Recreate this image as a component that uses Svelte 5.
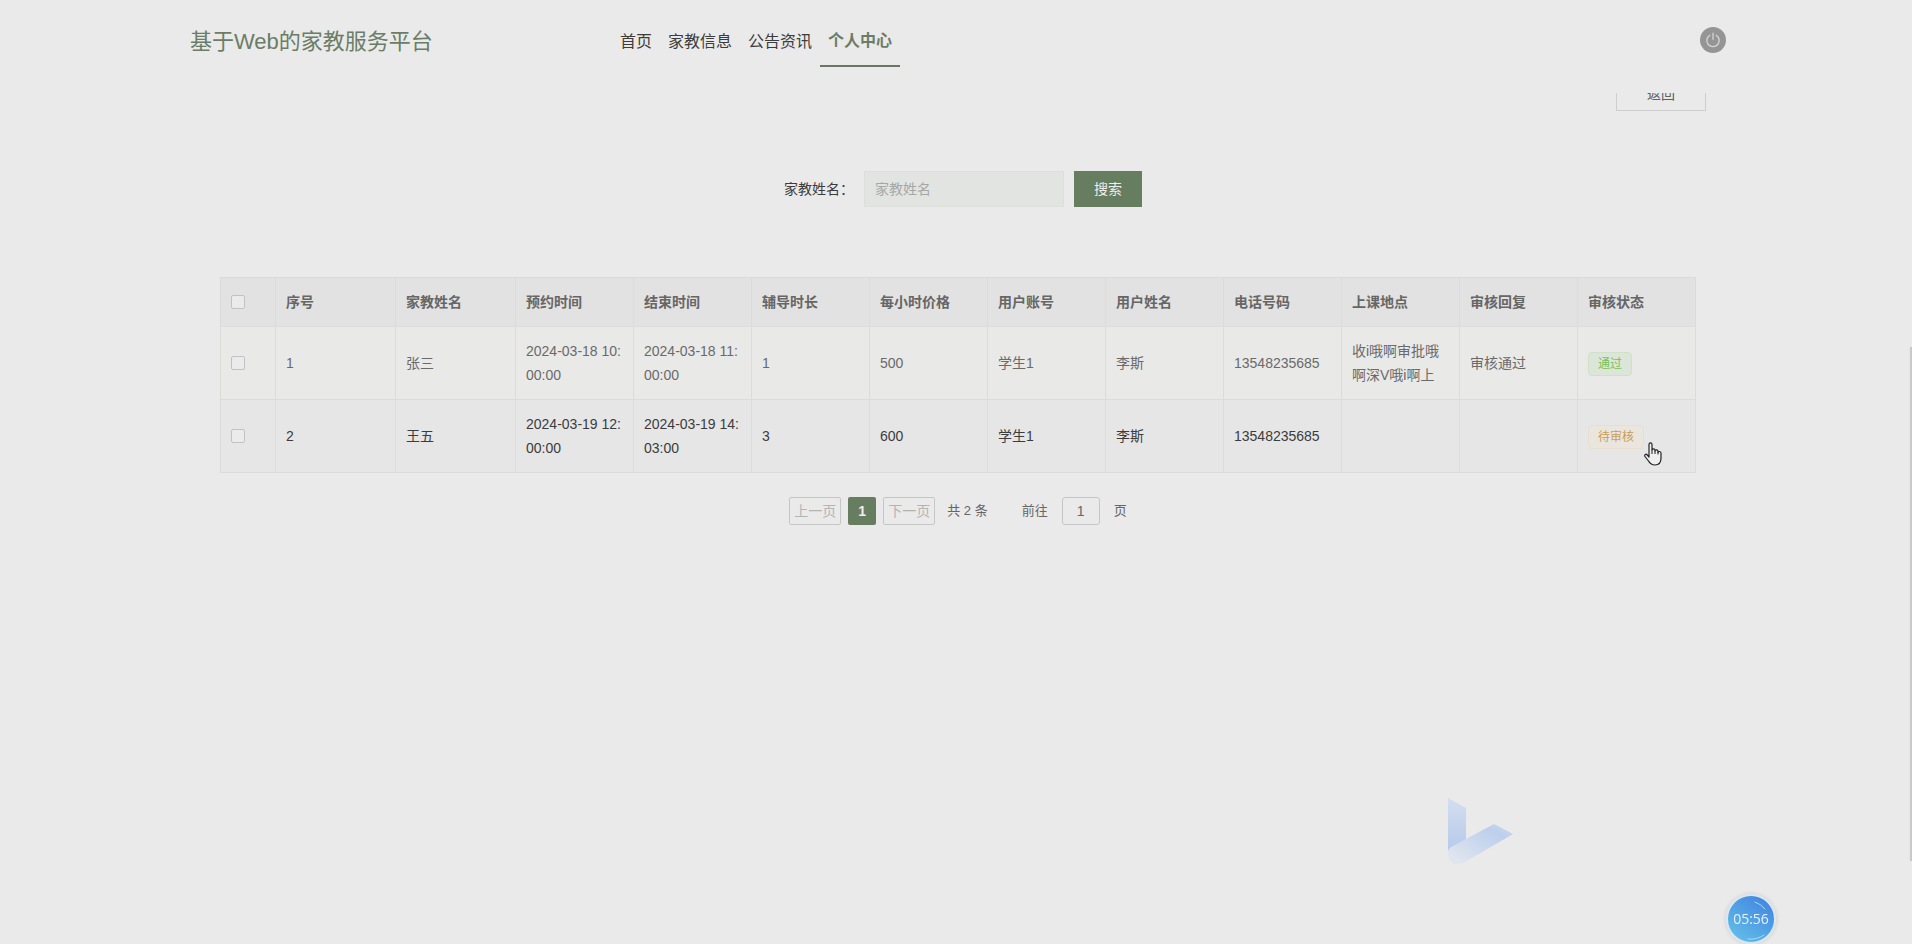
<script lang="ts">
	const menu = ["首页", "家教信息", "公告资讯", "个人中心"];
	const active = "个人中心";

	const columns = [
		"序号", "家教姓名", "预约时间", "结束时间", "辅导时长", "每小时价格",
		"用户账号", "用户姓名", "电话号码", "上课地点", "审核回复", "审核状态"
	];

	const rows = [
		{
			cells: ["1", "张三", "2024-03-18 10:00:00", "2024-03-18 11:00:00", "1", "500", "学生1", "李斯", "13548235685", "收i哦啊审批哦啊深V哦i啊上", "审核通过"],
			status: "通过",
			passed: true,
			hover: false
		},
		{
			cells: ["2", "王五", "2024-03-19 12:00:00", "2024-03-19 14:03:00", "3", "600", "学生1", "李斯", "13548235685", "", ""],
			status: "待审核",
			passed: false,
			hover: true
		}
	];

	let tutorName = $state("");
	let jumpPage = $state("1");
</script>

<header>
	<h1>基于Web的家教服务平台</h1>
	<nav>
		{#each menu as item}
			<a href="#/" class:active={item === active}>{item}</a>
		{/each}
	</nav>
	<button class="logout" aria-label="退出">
		<svg viewBox="0 0 26 26" width="26" height="26">
			<path d="M9.8 8.2a6.2 6.2 0 1 0 6.4 0M13 6.2v6" fill="none" stroke="#d6d6d6" stroke-width="1.3" stroke-linecap="round" />
		</svg>
	</button>
</header>

<main>
	<div class="back-row">
		<button class="back">返回</button>
	</div>

	<form class="search" onsubmit={(e) => e.preventDefault()}>
		<label for="tutor">家教姓名：</label>
		<input id="tutor" type="text" placeholder="家教姓名" bind:value={tutorName} />
		<button>搜索</button>
	</form>

	<table>
		<colgroup>
			<col class="col-check" />
			<col class="col-wide" />
			<col class="col-wide" />
			{#each columns.slice(2) as _}
				<col />
			{/each}
		</colgroup>
		<thead>
			<tr>
				<th><input type="checkbox" aria-label="全选" /></th>
				{#each columns as column}
					<th>{column}</th>
				{/each}
			</tr>
		</thead>
		<tbody>
			{#each rows as row}
				<tr class:hover={row.hover}>
					<td><input type="checkbox" aria-label={row.cells[1]} /></td>
					{#each row.cells as cell}
						<td>{cell}</td>
					{/each}
					<td><span class="tag" class:passed={row.passed}>{row.status}</span></td>
				</tr>
			{/each}
		</tbody>
	</table>

	<div class="pagination">
		<button class="step" disabled>上一页</button>
		<button class="current">1</button>
		<button class="step" disabled>下一页</button>
		<span class="total">共 2 条</span>
		<label for="jump">前往</label>
		<input id="jump" type="text" bind:value={jumpPage} />
		<span>页</span>
	</div>
</main>

<!-- floating things over the page -->
<svg class="bird" viewBox="0 0 70 70" width="70" height="70" aria-hidden="true">
	<defs>
		<linearGradient id="stem" x1="0" y1="0" x2="0" y2="1">
			<stop offset="0" stop-color="#d3deef" />
			<stop offset="1" stop-color="#b6caec" />
		</linearGradient>
		<linearGradient id="wing" x1="0" y1="1" x2="1" y2="0">
			<stop offset="0.1" stop-color="#e0e6ee" />
			<stop offset="0.75" stop-color="#bccfed" />
			<stop offset="1" stop-color="#cbd8ed" />
		</linearGradient>
	</defs>
	<path d="M0 2 18 12V46L0 55Z" fill="url(#stem)" />
	<path d="M0 56Q0 52 5 50L46 28 65 38 17 66Q10 70 4 67 0 64 0 56Z" fill="url(#wing)" />
</svg>

<div class="timer">
	<svg viewBox="0 0 46 46" width="46" height="46" aria-hidden="true">
		<path d="M27 6Q33 8 37 13M20 43Q29 44 36 39" fill="none" stroke="#a5dcf2" stroke-linecap="round" />
	</svg>
	<span>05:56</span>
</div>
<div class="scroll-thumb"></div>

<svg class="cursor" viewBox="0 0 18 24" width="18" height="24" aria-hidden="true">
	<path d="M5 15V2.5C5 .3 8 .3 8 2.500V8C8 6.500 11 6.500 11 8V9C11 7.500 14 7.500 14 9.200V10.500C14 9 17 9.200 17 11V16C17 20.500 14.500 23 11 23 7.500 23 6 21.500 4.500 19L1 14.500C0 12.500 2 11.500 3.300 13Z" fill="#efefef" stroke="#222" stroke-width="1.200" stroke-linejoin="round" />
	<path d="M8 8V12M11 9V12M14 10V12.500" fill="none" stroke="#222" />
</svg>

<style>
	:global(body) {
		background: #eaeaea;
		color: #3c3c3c;
		font: 14px/24px "Liberation Sans", "Noto Sans CJK SC", sans-serif;
	}

	button, input {
		box-sizing: border-box;
		margin: 0;
		font: inherit;
		color: inherit;
	}

	button {
		padding: 0;
		border: 0;
		background: none;
		cursor: pointer;
	}

	header {
		position: relative;
		z-index: 1;
		display: flex;
		align-items: flex-start;
		height: 93px;
		padding: 0 186px 0 190px;
		background: #eaeaea;
	}

	h1 {
		flex: 0 0 422px;
		margin: 0;
		font-size: 22px;
		font-weight: 400;
		line-height: 84px;
		color: #6b7d66;
	}

	nav {
		display: flex;
		flex: 1;
	}

	nav a {
		padding: 0 8px;
		font-size: 16px;
		line-height: 84px;
		color: #3c3c3c;
		text-decoration: none;
	}

	nav a.active {
		height: 65px;
		line-height: 82px;
		font-weight: 700;
		color: #6b7d66;
		border-bottom: 2px solid #6b7566;
	}

	.logout {
		width: 26px;
		height: 26px;
		margin-top: 27px;
		border-radius: 50%;
		background: #959595;
	}

	.logout svg {
		display: block;
	}

	/* page is scrolled a little, so the back button slides under the header */
	main {
		margin-top: -16px;
		padding: 0 216px 0 220px;
	}

	.back-row {
		display: flex;
		justify-content: flex-end;
		margin-right: -10px;
	}

	.back {
		width: 90px;
		height: 34px;
		border: 1px solid #cecece;
		color: #606060;
	}

	.search {
		display: flex;
		align-items: center;
		justify-content: center;
		gap: 10px;
		margin: 60px 0 70px 10px;
	}

	.search label {
		width: 70px;
	}

	.search input {
		width: 200px;
		height: 36px;
		padding: 0 10px;
		border: 1px solid #dddfdd;
		background: #e2e4e2;
		outline: none;
	}

	.search input::placeholder {
		color: #a6a8a6;
	}

	.search button {
		width: 68px;
		height: 36px;
		background: #677d60;
		color: #eee;
	}

	table {
		width: 100%;
		table-layout: fixed;
		border-spacing: 0;
		border: solid #dadada;
		border-width: 1px 0 0 1px;
	}

	.col-check {
		width: 55px;
	}

	.col-wide {
		width: 120px;
	}

	th, td {
		padding: 12px 10px;
		border: solid #dcdcdc;
		border-width: 0 1px 1px 0;
		text-align: left;
		word-break: break-all;
	}

	th {
		background: #e2e2e2;
		color: #666;
	}

	td {
		height: 48px;
		background: #e9e9e8;
		color: #6a6a6a;
	}

	.hover td {
		background: #e6e6e6;
		color: #3c3c3c;
	}

	input[type="checkbox"] {
		display: block;
		width: 14px;
		height: 14px;
		appearance: none;
		border: 1px solid #c2c2c2;
		border-radius: 2px;
		background: #ebebeb;
	}

	.tag {
		display: inline-block;
		padding: 0 9px;
		border: 1px solid #e6dfd2;
		border-radius: 4px;
		background: #eae6de;
		color: #cb9c5c;
		font-size: 12px;
		line-height: 22px;
		vertical-align: middle;
	}

	.tag.passed {
		border-color: #cfe2c8;
		background: #dce6d8;
		color: #78c05a;
	}

	.pagination {
		display: flex;
		align-items: center;
		justify-content: center;
		height: 28px;
		margin-top: 24px;
		font-size: 13px;
		color: #666;
	}

	.step {
		width: 52px;
		height: 28px;
		border: 1px solid #c6c6c6;
		border-radius: 2px;
		font-size: 14px;
		color: #b4b4b4;
	}

	.current {
		width: 28px;
		height: 28px;
		margin: 0 7px;
		border-radius: 2px;
		background: #677d60;
		color: #eee;
		font-size: 14px;
		font-weight: 700;
	}

	.total {
		margin: 0 34px 0 12px;
	}

	.pagination input {
		width: 38px;
		height: 28px;
		margin: 0 14px;
		padding: 0;
		border: 1px solid #c6c6c6;
		border-radius: 3px;
		background: none;
		font-size: 14px;
		text-align: center;
	}

	.bird {
		position: fixed;
		right: 394px;
		bottom: 78px;
	}

	.timer {
		position: fixed;
		right: 136px;
		bottom: 0;
		display: grid;
		place-items: center;
		width: 46px;
		height: 46px;
		border: 2px solid #d9e8f0;
		border-radius: 50%;
		background: linear-gradient(35deg, #66c4ea, #3f7fe0);
		box-shadow: 0 0 4px #c8c8c8;
		color: #e6f2fa;
		font: 14px/46px "Open Sans", sans-serif;
	}

	.timer svg, .timer span {
		grid-area: 1 / 1;
	}

	.scroll-thumb {
		position: fixed;
		top: 347px;
		right: 0;
		width: 2px;
		height: 514px;
		background: #c9c9c9;
		box-shadow: -2px 0 2px #e6e7ea;
	}

	.cursor {
		position: fixed;
		top: 442px;
		right: 250px;
	}
</style>
